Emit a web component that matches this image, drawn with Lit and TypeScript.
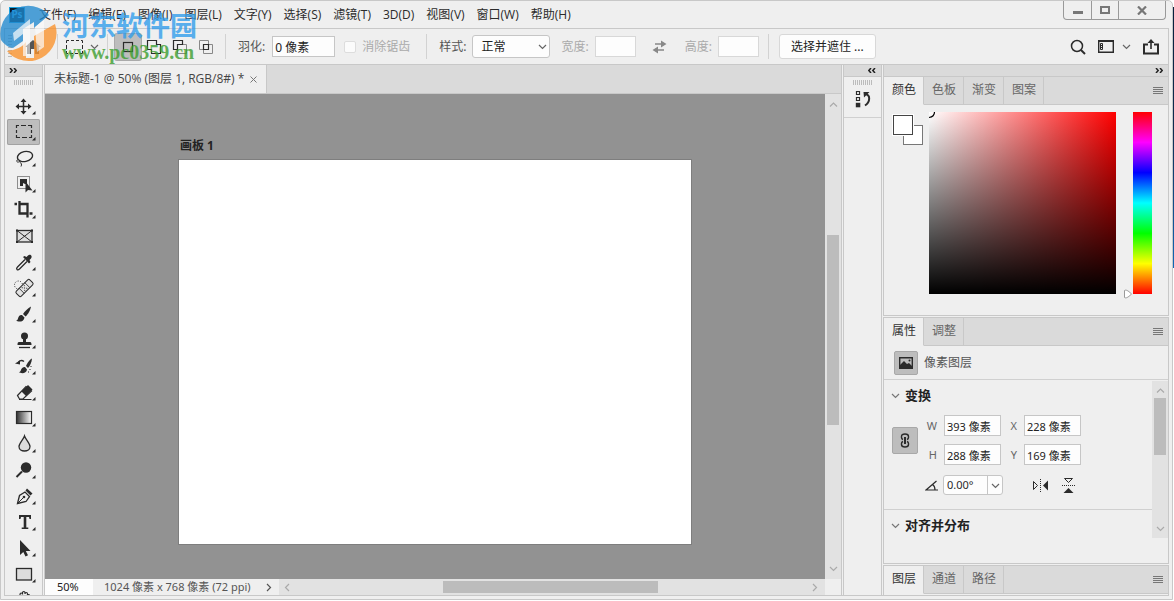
import { LitElement, html, svg, css } from "lit";
import { customElement, state } from "lit/decorators.js";
import { classMap } from "lit/directives/class-map.js";

const INK = "#2b2b2b";

const corner = svg`<path d="M28.5 18v3.500h-3.500z" fill="${INK}"/>`;

const tools = [
  { name: "移动工具", more: true, art: svg`<path d="M16.500 7v13M10 13.500h13" stroke="${INK}" stroke-width="1.500"/><path d="M16.500 5.500l3 3.500h-6zM16.500 21.500l3-3.500h-6zM8.500 13.500l3.500-3v6zM24.500 13.500l-3.500-3v6z" fill="${INK}"/>` },
  { name: "矩形选框工具", more: true, art: svg`<path d="M9.500 9V6.500H12M14 6.500h5M21 6.500h3.500V9M24.500 11v3M24.500 16v2.500H22M20 18.500h-5M13 18.500H9.500V16M9.500 14v-3" fill="none" stroke="${INK}" stroke-width="1.200"/>` },
  { name: "套索工具", more: true, art: svg`<ellipse cx="18" cy="11.500" rx="7.700" ry="5" transform="rotate(-12 18 11.500)" fill="none" stroke="${INK}" stroke-width="1.400"/><path d="M11 14.500c-2 1-1.500 3 .5 2.500s1.500-2 .2-2.300M12.500 17c2 1 2.500 2.500 1.500 4.500" fill="none" stroke="${INK}"/>` },
  { name: "对象选择工具", more: true, art: svg`<rect x="10.500" y="5.500" width="12" height="12" fill="none" stroke="${INK}" stroke-dasharray="1 1"/><path d="M13 8h7v5h-2l-2-1v3h-3z" fill="${INK}"/><path d="M18.500 10.500v11l2.500-2.500 4.500.5z" fill="${INK}"/>` },
  { name: "裁剪工具", more: true, art: svg`<path d="M7.500 7H10M12.500 4v12.500H20M13 7h7.500v13.500M22.500 16.500h3" fill="none" stroke="${INK}" stroke-width="2.300"/>` },
  { name: "图框工具", more: false, art: svg`<rect x="10" y="7.500" width="15" height="11.500" fill="#ddd" stroke="${INK}" stroke-width="1.300"/><path d="M10 7.500l15 11.500M25 7.500L10 19" stroke="${INK}"/><path d="M9 6.500h2v2H9zM24 6.500h2v2h-2zM9 18h2v2H9zM24 18h2v2h-2z" fill="${INK}"/>` },
  { name: "吸管工具", more: true, art: svg`<path d="M18 10.500l-7.500 7.500c-1 1-1 2-.5 2.500s1.500.5 2.500-.5l7.500-7.500" fill="#eee" stroke="${INK}" stroke-width="1.300"/><path d="M16 8l1.500-1 2 1 1.500-1.500c2-2 5 .5 3 3L22.500 11l1 2-1.500 1.500z" fill="${INK}"/>` },
  { name: "污点修复画笔工具", more: true, art: svg`<circle cx="11.500" cy="10" r="4" fill="none" stroke="${INK}" stroke-dasharray="1 1.500"/><g transform="rotate(-45 17.500 13)"><rect x="8" y="9.500" width="19" height="7" rx="1.500" fill="#e2e2e2" stroke="${INK}"/><path d="M13.500 9.500v7M21.500 9.500v7" stroke="${INK}" stroke-width=".8"/><path d="M15.500 10.700h1v1h-1zM18.500 10.700h1v1h-1zM15.500 14.300h1v1h-1zM18.500 14.300h1v1h-1zM17 12.500h1v1h-1z" fill="${INK}"/></g>` },
  { name: "画笔工具", more: true, art: svg`<path d="M24 5.500c-3 1.500-6.500 5-8 7.500l2.500 2.500c2.500-2 5-6.500 5.500-10z" fill="${INK}"/><path d="M15 14c-2.500-.3-3.500 1.500-4 3.500-.4 1.500-1 2-2 2 2.500 2 8 1.500 8.500-3z" fill="${INK}"/>` },
  { name: "仿制图章工具", more: true, art: svg`<circle cx="17.500" cy="9" r="3.500" fill="${INK}"/><path d="M16 11h3v4h4c1.200 0 1.500 1 1.500 3h-14c0-2 .3-3 1.500-3h4z" fill="${INK}"/><path d="M12 20.500h11" stroke="${INK}" stroke-width="1.300"/>` },
  { name: "历史记录画笔工具", more: true, art: svg`<path d="M25 5.500c-2.500 1-5 5-6 7.500l2 2c2-2 3.800-6 4-9.500z" fill="${INK}"/><path d="M18 14c-2.500 0-3.500 1.500-4.200 3.500-.5 1-1 1.500-2 1.500 2.500 2 7.700 1.500 8.200-2.500z" fill="${INK}"/><path d="M17 8.500c-2-1.500-4-1-5.500.5" fill="none" stroke="${INK}" stroke-width="1.500"/><path d="M8 10.500l5-3v4z" fill="${INK}"/><path d="M24 13v1M23 16v1M21.500 18.500v1" stroke="${INK}"/>` },
  { name: "橡皮擦工具", more: true, art: svg`<path d="M10.500 16.500l8.500-9 5.500 4.500-8.500 8h-3.500z" fill="#eee" stroke="${INK}" stroke-width="1.200"/><path d="M14.500 12.500l6.500-6.500 4.500 4.500-6.500 6.500z" fill="${INK}"/><path d="M12 20.500h12.500" stroke="${INK}"/>` },
  { name: "渐变工具", more: true, art: svg`<defs><linearGradient id="g"><stop stop-color="#333"/><stop offset="1" stop-color="#fff"/></linearGradient></defs><rect x="9.500" y="6.500" width="15" height="12" fill="url(#g)" stroke="${INK}" stroke-width="1.200"/>` },
  { name: "模糊工具", more: true, art: svg`<path d="M17.500 5c-1 3.500-5.500 7-5.500 10.500 0 6 11 6 11 0C23 12 18.500 8.500 17.500 5z" fill="#ddd" stroke="${INK}" stroke-width="1.300"/>` },
  { name: "减淡工具", more: true, art: svg`<circle cx="19" cy="10.500" r="5.200" fill="${INK}"/><path d="M15 14.500l-5.500 5.500" stroke="${INK}" stroke-width="2"/>` },
  { name: "钢笔工具", more: true, art: svg`<path d="M10.500 20.500l2-8 5.500-3.500 4.500 4.500-3.500 5z" fill="#eee" stroke="${INK}" stroke-width="1.300"/><path d="M10.500 20.500l6-6" stroke="${INK}"/><circle cx="17" cy="14" r="1.300" fill="${INK}"/><path d="M18.500 7.500l1.500-2 5.500 5-2 2z" fill="${INK}"/>` },
  { name: "横排文字工具", more: true, art: svg`<path d="M12 6h12v4h-1.500l-.5-2h-2.700v10.500h2V20h-6.600v-1.500h2V8H14l-.5 2H12z" fill="${INK}"/>` },
  { name: "路径选择工具", more: true, art: svg`<path d="M13 5v15l3.300-3 2.200 4.500 2.500-1.200-2.200-4.300h4.700z" fill="${INK}"/>` },
  { name: "矩形工具", more: true, art: svg`<rect x="9.500" y="7.500" width="15" height="11.500" fill="#ddd" stroke="${INK}" stroke-width="1.300"/>` },
  { name: "抓手工具", more: false, art: svg`<path d="M13 14V7.500c0-2 2.500-2 2.500 0V6c0-2 2.500-2 2.500 0v1c0-2 2.500-2 2.500 0v1.500c1-1.500 2.500-.5 2 1L22 14" fill="#eee" stroke="${INK}" stroke-width="1.200"/>` },
];

const menus = ["文件(F)", "编辑(E)", "图像(I)", "图层(L)", "文字(Y)", "选择(S)", "滤镜(T)", "3D(D)", "视图(V)", "窗口(W)", "帮助(H)"];

const modes = [
  { name: "新选区", art: svg`<rect x="8.500" y="8.500" width="9" height="9" fill="none" stroke="${INK}" stroke-width="1.200"/>` },
  { name: "添加到选区", art: svg`<path d="M6.500 6.500h9v4h4v9h-9v-4h-4z" fill="none" stroke="${INK}" stroke-width="1.200"/>` },
  { name: "从选区减去", art: svg`<path d="M15.500 10.500h4v9h-9v-4" fill="none" stroke="#888"/><path d="M6.500 6.500h9v4h-5v5h-4z" fill="none" stroke="${INK}" stroke-width="1.200"/>` },
  { name: "与选区交叉", art: svg`<path d="M6.500 6.500h9v9h-9zM10.500 10.500h9v9h-9z" fill="none" stroke="#888"/><path d="M10.500 10.500h5v5h-5z" fill="none" stroke="${INK}" stroke-width="1.200"/>` },
];

const chevron = (dir: string) => {
  const paths: Record<string, string> = {
    down: "M1 3l3.500 3.500L8 3",
    up: "M1 6.500L4.500 3 8 6.500",
    left: "M6 1L2.500 4.500 6 8",
    right: "M3 1l3.500 3.500L3 8",
  };
  return html`<svg class="chev" width="9" height="9" viewBox="0 0 9 9"><path d=${paths[dir]} fill="none" stroke="currentColor" stroke-width="1.200"/></svg>`;
};

const doubleChevron = (left: boolean) => html`<svg width="8" height="5" viewBox="0 0 8 5"><path d=${left ? "M3 0L.8 2.500 3 5M7 0L4.800 2.500 7 5" : "M1 0l2.200 2.500L1 5M5 0l2.200 2.500L5 5"} fill="none" stroke="#222" stroke-width="1.500"/></svg>`;

@customElement("app-root")
export class AppRoot extends LitElement {
  @state() private tool = 1;
  @state() private mode = 0;

  static styles = css`
    :host {
      display: block;
      height: 100vh;
      overflow: hidden;
      position: relative;
      background: linear-gradient(#fff 7px, #08203c 7px, #0d2c50 130px, #1068b8 268px, #fff 268px);
      font: 12px/16px "Noto Sans", "Noto Sans CJK SC", sans-serif;
      color: #2b2b2b;
    }
    * { box-sizing: border-box; }
    button, input, select { font: inherit; color: inherit; margin: 0; padding: 0; border: 0; background: none; border-radius: 0; outline: 0; }
    svg { display: block; flex: none; }
    .window { display: flex; flex-direction: column; height: calc(100% - 1px); margin-right: 1px; padding: 0 3px 3px; border: 1px solid #c8c8c8; border-radius: 5px 5px 0 0; background: #efefef; }

    .menubar { display: flex; align-items: center; height: 28px; flex: none; border-bottom: 1px solid #c8c8c8; padding-left: 5px; }
    .logo { width: 16px; height: 16px; margin-right: 14px; background: #061c2b; border: 1px solid #1fa4e0; color: #37b6f4; font-size: 10px; line-height: 13px; text-align: center; font-weight: 700; }
    .menus { display: flex; gap: 12px; flex: 1; font-family: "Open Sans", "Noto Sans CJK SC", sans-serif; }
    .menus button { white-space: nowrap; }
    .winctl { display: flex; align-self: flex-start; margin-right: 3px; border: 1px solid #999; border-top: 0; border-radius: 0 0 4px 4px; height: 19px; }
    .winctl button { width: 27px; display: grid; place-items: center; }
    .winctl button + button { border-left: 1px solid #999; }
    .winctl .close { width: 47px; }

    .options { display: flex; align-items: center; height: 36px; flex: none; border: 1px solid #c8c8c8; border-top: 0; color: #555; padding: 0 9px 0 3px; white-space: nowrap; }
    .grip { width: 20px; height: 5px; background: repeating-linear-gradient(90deg, #bbb 0 1px, transparent 1px 2px); }
    .vgrip { width: 4px; height: 24px; margin-right: 13px; background: repeating-linear-gradient(#bbb 0 1px, transparent 1px 3px); }
    .sep { width: 1px; height: 25px; background: #d2d2d2; flex: none; }
    .sep.gap { margin-left: 9px; }
    .home { margin-right: 16px; }
    .preset { display: flex; align-items: center; gap: 7px; padding: 0 8px; color: #666; }
    .modes { display: flex; padding: 0 6px 0 7px; }
    .modes button { width: 26px; height: 26px; }
    .modes .on { background: #bdbdbd; box-shadow: 0 0 0 1px #aaa; border-radius: 2px; }
    .field { height: 21px; border: 1px solid #c6c6c6; background: #fdfdfd; color: #222; padding: 0 2px; }
    .feather { margin: 0 9px 0 7px; width: 63px; }
    .muted { color: #aaa; }
    .feather-label { margin-left: 12px; }
    .anti { display: flex; align-items: center; gap: 6px; margin-right: 16px; }
    .anti input { appearance: none; width: 12px; height: 12px; border: 1px solid #ddd; border-radius: 2px; background: #fbfbfb; }
    .style-label { margin-left: 12px; }
    .drop { display: grid; align-items: center; margin: 0 11px 0 6px; }
    .drop select, .drop .chev { grid-area: 1 / 1; }
    .drop select { appearance: none; width: 78px; height: 23px; padding-left: 8px; background: #fdfdfd; border: 1px solid #c6c6c6; border-radius: 3px; color: #222; }
    .drop .chev { justify-self: end; margin-right: 3px; pointer-events: none; color: #666; }
    .size { width: 41px; margin-left: 6px; border-color: #d8d8d8; }
    .swap { margin: 0 18px 0 16px; }
    .mask { height: 25px; padding: 0 11px; margin-left: 10px; background: #fdfdfd; border: 1px solid #d8d8d8; border-radius: 3px; color: #222; }
    .right-tools { display: flex; align-items: center; gap: 12px; margin-left: auto; }
    .right-tools .ws { display: flex; align-items: center; gap: 8px; color: #666; }

    .main { display: flex; gap: 1px; flex: 1; min-height: 0; border-bottom: 1px solid #c8c8c8; }
    .col-head { height: 12px; flex: none; display: flex; align-items: center; background: #dadada; border-bottom: 1px solid #c8c8c8; padding: 0 4px; }
    .toolbar { width: 39px; flex: none; display: flex; flex-direction: column; overflow: hidden; border: solid #c8c8c8; border-width: 0 1px; }
    .toolbar .grip, .dock .grip { margin: 3px 9px 8px; flex: none; }
    .tool { width: 33px; height: 26px; margin-left: 2px; flex: none; border-radius: 2px; }
    .tool.on { background: #bdbdbd; box-shadow: inset 0 0 0 1px #a2a2a2; }

    .doc { flex: 1; min-width: 0; display: flex; flex-direction: column; border: solid #c8c8c8; border-width: 0 1px; }
    .doc-tabs { height: 29px; flex: none; background: #dadada; border-bottom: 1px solid #c8c8c8; display: flex; }
    .doc-tab { display: flex; align-items: center; gap: 6px; padding: 0 9px; background: #efefef; border-right: 1px solid #c8c8c8; color: #444; white-space: nowrap; font-family: "Open Sans", "Noto Sans CJK SC", sans-serif; }
    .stage { flex: 1; min-height: 0; display: grid; grid-template: minmax(0, 1fr) 16px / minmax(0, 1fr) 16px; }
    .canvas { background: #929292; overflow: hidden; padding: 44px 0 0 133px; }
    .canvas h2 { margin: 0; padding-left: 2px; font-size: 12px; line-height: 16px; font-weight: 700; color: #222; height: 21px; }
    .artboard { width: 514px; height: 386px; background: #fff; border: 1px solid #7e7e7e; }
    .scroll { background: #e2e2e2; color: #aaa; display: flex; align-items: center; }
    .vs { flex-direction: column; padding: 6px 0; }
    .track { flex: 1; display: flex; align-items: center; }
    .vs .track { flex-direction: column; }
    .thumb { background: #bcbcbc; }
    .vs .thumb { width: 12px; height: 190px; margin-top: 126px; }
    .status { display: flex; min-width: 0; }
    .zoom { width: 48px; background: #fdfdfd; font-size: 11px; padding-left: 12px; height: 16px; color: #222; }
    .info { display: flex; align-items: center; gap: 13px; width: 186px; flex: none; padding-left: 11px; font-size: 11px; color: #555; white-space: nowrap; }
    .hs { flex: 1; padding: 0 6px 0 4px; }
    .hs .thumb { width: 215px; height: 12px; margin-left: 151px; }

    .dock { width: 39px; flex: none; border: solid #c8c8c8; border-width: 0 1px; }
    .dock .col-head, .panels .col-head { justify-content: flex-end; padding-right: 5px; }
    .dock .history { width: 100%; height: 26px; display: grid; place-items: center; }
    .dock-item { border-bottom: 1px solid #d0d0d0; height: 41px; overflow: hidden; }
    .dock .dock-item .grip { margin-bottom: 1px; }

    .panels { width: 286px; flex: none; display: flex; flex-direction: column; gap: 1px; }
    .panel { border: 1px solid #c8c8c8; }
    .panel.color { border-top: 0; }
    .panel.props { flex: 1; min-height: 0; display: flex; flex-direction: column; }
    .panel.layers { border-bottom: 0; padding-bottom: 1px; }
    .tabs { display: flex; height: 28px; flex: none; background: #dadada; }
    .tabs button { width: 40px; padding: 0 0 2px 1px; border: solid #c8c8c8; border-width: 0 1px 1px 0; color: #666; }
    .tabs .on { background: #efefef; border-bottom-color: #efefef; color: #333; }
    .tabs .rest { flex: 1; display: flex; align-items: center; justify-content: flex-end; padding-right: 5px; border-bottom: 1px solid #c8c8c8; }
    .tabs .rest button { width: 10px; padding: 0; border: 0; }
    .picker { display: flex; padding: 7px 16px 21px 9px; height: 210px; }
    .swatches { width: 36px; display: flex; flex-direction: column; padding-top: 3px; }
    .swatches i { display: block; width: 20px; height: 20px; background: #fff; border: 1px solid #444; flex: none; }
    .swatches i:last-child { margin: -10px 0 0 10px; border-color: #777; }
    .swatches i:first-child { z-index: 1; box-shadow: 0 0 0 1px #fff; }
    .field2d { flex: 1; background: linear-gradient(to top, #000, transparent), linear-gradient(to right, #fff, #f00); }
    .slider { width: 17px; display: flex; align-items: flex-end; justify-content: flex-end; margin-bottom: -5px; }
    .hue { width: 19px; background: linear-gradient(#f00, #f0f, #00f, #0ff, #0f0, #ff0, #f00); }

    .kind { display: flex; align-items: center; gap: 6px; height: 34px; flex: none; padding-left: 10px; border-bottom: 1px solid #d0d0d0; color: #555; }
    .square { width: 24px; height: 24px; display: grid; place-items: center; background: #bdbdbd; border: 1px solid #a8a8a8; border-radius: 2px; }
    .body { flex: 1; min-height: 0; display: flex; }
    .sections { flex: 1; }
    .section { border-bottom: 1px solid #d0d0d0; height: 130px; padding: 7px 0 0 7px; }
    .section.last { border: 0; height: auto; }
    .section h3 { display: flex; align-items: center; gap: 5px; margin: 0; font-size: 13px; line-height: 16px; color: #222; }
    .section h3 .chev { color: #777; }
    .geo { display: grid; grid-template-columns: 26px 24px 57px 21px 57px; column-gap: 1px; row-gap: 8px; align-items: center; margin: 12px 0 0 1px; font-size: 11px; color: #666; }
    .geo label { text-align: right; padding-right: 6px; }
    .geo .square { grid-row: 1 / 3; width: 26px; height: 27px; }
    .geo input { width: 100%; min-width: 0; }
    .rot { display: flex; align-items: center; margin-top: 10px; padding-left: 34px; font-size: 11px; }
    .rot .combo { display: flex; align-items: center; width: 60px; height: 20px; margin: 0 29px 0 4px; border: 1px solid #c6c6c6; border-radius: 3px; background: #fdfdfd; }
    .rot input { width: 43px; padding-left: 3px; }
    .rot .combo button { flex: 1; height: 18px; display: grid; place-items: center; border-left: 1px solid #c6c6c6; color: #666; }
    .rot > button + button { margin-left: 13px; }
    .ps { width: 16px; height: 157px; margin-top: 1px; flex-direction: column; padding: 5px 0; }
    .ps .track { flex-direction: column; }
    .ps .thumb { width: 12px; height: 57px; margin-top: 3px; }

    .mark { position: absolute; left: 0; top: 0; display: flex; pointer-events: none; opacity: .78; }
    .mark .words { padding: 10px 0 0 3px; white-space: nowrap; }
    .mark .cn { font: 700 27px/30px "Noto Sans CJK SC", sans-serif; color: #2e9cec; }
    .mark .url { font: 700 20px/25px "Liberation Serif", serif; color: #3a9d2d; }
  `;

  private tabs(names: string[]) {
    return html`<div class="tabs">
      ${names.map((n, i) => html`<button class=${classMap({ on: i === 0 })}>${n}</button>`)}
      <div class="rest"><button aria-label="面板菜单"><svg width="10" height="8" viewBox="0 0 10 8"><path d="M0 .5h10M0 2.500h10M0 4.500h10M0 6.500h10" stroke="#777"/></svg></button></div>
    </div>`;
  }

  private num(id: string, label: string, value: string) {
    return html`<label for=${id}>${label}</label><input class="field" id=${id} .value=${value} />`;
  }

  render() {
    return html`
      <div class="window">
        <header class="menubar">
          <div class="logo">Ps</div>
          <nav class="menus">${menus.map((m) => html`<button>${m}</button>`)}</nav>
          <div class="winctl">
            <button aria-label="最小化"><svg width="10" height="10" viewBox="0 0 10 10"><path d="M0 7.500h10" stroke="#777" stroke-width="3"/></svg></button>
            <button aria-label="最大化"><svg width="10" height="8" viewBox="0 0 10 8"><path d="M1 1h8v6H1z" fill="none" stroke="#777" stroke-width="2"/></svg></button>
            <button class="close" aria-label="关闭"><svg width="10" height="9" viewBox="0 0 10 9"><path d="M1 .5l8 8M9 .5l-8 8" stroke="#777" stroke-width="2.200"/></svg></button>
          </div>
        </header>

        <div class="options">
          <div class="vgrip"></div>
          <button class="home" aria-label="主页"><svg width="16" height="14" viewBox="0 0 16 14"><path d="M8 0l8 7h-2v7h-4V9H6v5H2V7H0z" fill="#555"/></svg></button>
          <div class="sep"></div>
          <div class="preset">
            <svg width="17" height="14" viewBox="0 0 17 14"><path d="M.5 3V.5H3M5 .5h3M10 .5h3M15 .5h1.500V3M16.500 5v4M16.500 11v2.500H14M12 13.500H9M7 13.500H4M2 13.500H.5V11M.5 9V5" fill="none" stroke="${INK}"/></svg>
            ${chevron("down")}
          </div>
          <div class="sep"></div>
          <div class="modes">
            ${modes.map((m, i) => html`<button aria-label=${m.name} class=${classMap({ on: i === this.mode })} @click=${() => (this.mode = i)}><svg width="26" height="26" viewBox="0 0 26 26">${m.art}</svg></button>`)}
          </div>
          <div class="sep"></div>
          <label class="feather-label" for="feather">羽化:</label>
          <input class="field feather" id="feather" value="0 像素" />
          <label class="anti muted"><input type="checkbox" disabled />消除锯齿</label>
          <div class="sep"></div>
          <label class="style-label" for="style">样式:</label>
          <div class="drop"><select id="style"><option>正常</option></select>${chevron("down")}</div>
          <label class="muted" for="w0">宽度:</label><input class="field size" id="w0" disabled />
          <button class="swap" aria-label="互换"><svg width="15" height="14" viewBox="0 0 15 14"><path d="M3 4h7M5 10h7" stroke="#888" stroke-width="1.500"/><path d="M9 .5L14.500 4 9 7.500zM6 6.500L.5 10 6 13.500z" fill="#888"/></svg></button>
          <label class="muted" for="h0">高度:</label><input class="field size" id="h0" disabled />
          <div class="sep gap"></div>
          <button class="mask">选择并遮住 ...</button>
          <div class="right-tools">
            <button aria-label="搜索"><svg width="16" height="16" viewBox="0 0 16 16"><circle cx="7" cy="7" r="5.500" fill="none" stroke="${INK}" stroke-width="1.500"/><path d="M11 11l4 4" stroke="${INK}" stroke-width="2"/></svg></button>
            <button class="ws" aria-label="工作区"><svg width="16" height="13" viewBox="0 0 16 13"><path d="M.7 1.200h14.600v11H.7z" fill="none" stroke="${INK}" stroke-width="1.400"/><path d="M0 1h16" stroke="${INK}" stroke-width="2"/><path d="M2.500 3.500h2v6h-2zM2.500 5.500h2M2.500 7.500h2" fill="none" stroke="${INK}"/></svg>${chevron("down")}</button>
            <button aria-label="共享"><svg width="16" height="16" viewBox="0 0 16 16"><path d="M5 5.500H1v9h14v-9h-4" fill="none" stroke="${INK}" stroke-width="2"/><path d="M8 10V3" stroke="${INK}" stroke-width="1.600"/><path d="M8 0l3.500 4h-7z" fill="${INK}"/></svg></button>
          </div>
        </div>

        <div class="main">
          <aside class="toolbar">
            <div class="col-head">${doubleChevron(false)}</div>
            <div class="grip"></div>
            ${tools.map((t, i) => html`<button aria-label=${t.name} class=${classMap({ tool: true, on: i === this.tool })} @click=${() => (this.tool = i)}><svg width="33" height="26" viewBox="0 0 33 26">${t.art}${t.more ? corner : ""}</svg></button>`)}
          </aside>

          <main class="doc">
            <div class="doc-tabs">
              <div class="doc-tab"><span>未标题-1 @ 50% (图层 1, RGB/8#) *</span><button aria-label="关闭文档"><svg width="7" height="7" viewBox="0 0 7 7"><path d="M.5.5l6 6M6.500.5l-6 6" stroke="#777"/></svg></button></div>
            </div>
            <div class="stage">
              <div class="canvas"><h2>画板 1</h2><div class="artboard"></div></div>
              <div class="scroll vs">${chevron("up")}<div class="track"><div class="thumb"></div></div>${chevron("down")}</div>
              <div class="status">
                <input class="zoom" aria-label="缩放" value="50%" />
                <div class="info"><span>1024 像素 x 768 像素 (72 ppi)</span>${chevron("right")}</div>
                <div class="scroll hs">${chevron("left")}<div class="track"><div class="thumb"></div></div>${chevron("right")}</div>
              </div>
            </div>
          </main>

          <aside class="dock">
            <div class="col-head">${doubleChevron(true)}</div>
            <div class="dock-item">
              <div class="grip"></div>
              <button class="history" aria-label="历史记录"><svg width="16" height="18" viewBox="0 0 16 18"><path d="M1.500 1.500h3v3h-3zM1.500 7.500h3v3h-3z" fill="none" stroke="${INK}" stroke-width="1.200"/><path d="M.8 12.800h4.500v4.500H.8z" fill="${INK}"/><path d="M10.500 4c5 1 5 8-.5 11.500" fill="none" stroke="${INK}" stroke-width="2"/><path d="M8.500 2h6L9 7.500z" fill="${INK}"/></svg></button>
            </div>
          </aside>

          <aside class="panels">
            <section class="panel color">
              <div class="col-head">${doubleChevron(false)}</div>
              ${this.tabs(["颜色", "色板", "渐变", "图案"])}
              <div class="picker">
                <div class="swatches"><i></i><i></i></div>
                <div class="field2d"><svg width="8" height="8" viewBox="0 0 8 8"><path d="M5.500 0c0 3-2 5-5.500 5.500" fill="none" stroke="#000" stroke-width="1.200"/></svg></div>
                <div class="slider"><svg width="10" height="10" viewBox="0 0 10 10"><path d="M1.500 1.500C3 .5 5 1.500 8.500 5 5 8.500 3 9.500 1.500 8.500z" fill="#fff" stroke="#999"/></svg></div>
                <div class="hue"></div>
              </div>
            </section>

            <section class="panel props">
              ${this.tabs(["属性", "调整"])}
              <div class="kind">
                <span class="square"><svg width="14" height="12" viewBox="0 0 14 12"><path d="M.7.7h12.600v10.600H.7z" fill="none" stroke="${INK}" stroke-width="1.400"/><path d="M1 11V8l4-4 3 3 2-1 3 3v2z" fill="${INK}"/><circle cx="10.500" cy="3.500" r="1" fill="${INK}"/></svg></span>
                <span>像素图层</span>
              </div>
              <div class="body">
                <div class="sections">
                  <div class="section">
                    <h3>${chevron("down")}变换</h3>
                    <div class="geo">
                      <button class="square" aria-label="链接宽高"><svg width="10" height="15" viewBox="0 0 10 15"><path d="M3 6.500Q1.500 6 1.500 4.500V3.500Q1.500 1 5 1t3.500 2.500v1Q8.500 6 7 6.500M3 8.500Q1.500 9 1.500 10.500v1Q1.500 14 5 14t3.500-2.500v-1Q8.500 9 7 8.500" fill="none" stroke="${INK}" stroke-width="1.400"/><path d="M5 4v7" stroke="${INK}" stroke-width="2"/></svg></button>
                      ${this.num("w", "W", "393 像素")}${this.num("x", "X", "228 像素")}
                      ${this.num("h", "H", "288 像素")}${this.num("y", "Y", "169 像素")}
                    </div>
                    <div class="rot">
                      <svg width="14" height="11" viewBox="0 0 14 11"><path d="M13 10H1L11.500 1M7.500 4.500Q10 6 10 10" fill="none" stroke="${INK}" stroke-width="1.200"/></svg>
                      <div class="combo"><input aria-label="角度" value="0.00°" /><button aria-label="角度选项">${chevron("down")}</button></div>
                      <button aria-label="水平翻转"><svg width="17" height="13" viewBox="0 0 17 13"><path d="M8.500 0v13" stroke="${INK}" stroke-dasharray="1 1"/><path d="M1.500 2.500v8l4-4z" fill="none" stroke="${INK}"/><path d="M16 1.500v10l-5-5z" fill="${INK}"/></svg></button>
                      <button aria-label="垂直翻转"><svg width="13" height="17" viewBox="0 0 13 17"><path d="M0 8.500h13" stroke="${INK}" stroke-dasharray="1 1"/><path d="M2.500 1.500h8l-4 4z" fill="none" stroke="${INK}"/><path d="M1.500 16h10l-5-5z" fill="${INK}"/></svg></button>
                    </div>
                  </div>
                  <div class="section last"><h3>${chevron("down")}对齐并分布</h3></div>
                </div>
                <div class="scroll ps">${chevron("up")}<div class="track"><div class="thumb"></div></div>${chevron("down")}</div>
              </div>
            </section>

            <section class="panel layers">${this.tabs(["图层", "通道", "路径"])}</section>
          </aside>
        </div>
      </div>

      <div class="mark">
        <svg width="59" height="64" viewBox="0 0 59 64">
          <path d="M1 40A28 28 0 0 1 49 15L34 28V22L23 29V41L13 48Q6 47 1 40z" fill="#2089cf"/>
          <path d="M55 24A28 28 0 0 1 7 51Q20 50 26 42V58H34V36z" fill="#fb922a"/>
          <path d="M13 33L30 19V56H23V34L14 41zM35 27L44 20V47L37 52z" fill="#fff" opacity=".7"/>
        </svg>
        <div class="words"><div class="cn">河东软件园</div><div class="url">www.pc0359.cn</div></div>
      </div>
    `;
  }
}
